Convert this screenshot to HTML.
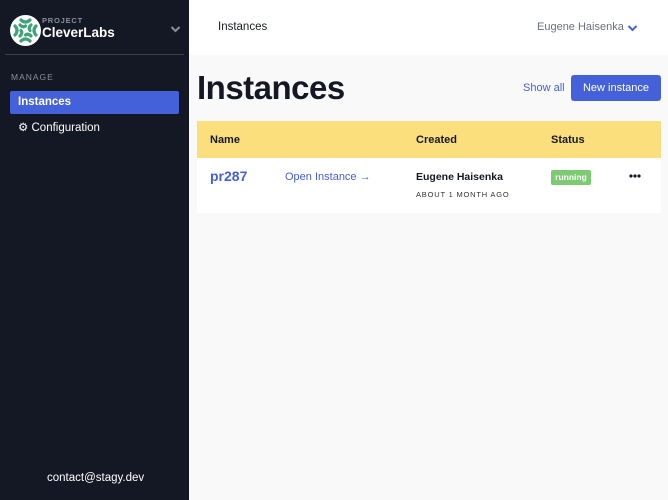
<!DOCTYPE html>
<html><head><meta charset="utf-8"><style>
*{box-sizing:border-box;margin:0;padding:0}
body{width:668px;height:500px;overflow:hidden;font-family:"Liberation Sans",sans-serif;background:#f9f9f9;position:relative}
.sb{position:absolute;left:0;top:0;width:189px;height:500px;background:#141824}
.abs{position:absolute;white-space:nowrap}
.main{position:absolute;left:189px;top:0;right:0;bottom:0}
</style></head><body>
<div class="sb">
  <svg class="abs" style="left:10px;top:15px" width="31" height="31" viewBox="0 0 31 31">
    <circle cx="15.5" cy="15.5" r="15.5" fill="#fff"/>
    <g fill="none" stroke="#3fa37a" stroke-width="3.2" stroke-linecap="round">
      <path d="M11 5 Q15.5 9 20 5"/><path d="M11 26 Q15.5 22 20 26"/>
      <path d="M5 11 Q9 15.5 5 20"/><path d="M26 11 Q22 15.5 26 20"/>
      <path d="M10 10 Q13 13 15.5 11"/><path d="M21 21 Q18 18 15.5 20"/>
      <path d="M21 10 Q18 13 20 15.5"/><path d="M10 21 Q13 18 11 15.5"/>
    </g>
  </svg>
  <div class="abs" style="left:42px;top:16px;font-size:7.5px;letter-spacing:0.8px;color:#8a8f9c;font-weight:bold">PROJECT</div>
  <div class="abs" style="left:42px;top:25px;font-size:13.5px;color:#fff;font-weight:bold">CleverLabs</div>
  <svg class="abs" style="left:170px;top:25px" width="11" height="8" viewBox="0 0 11 8"><path d="M1.5 2 L5.5 6 L9.5 2" stroke="#8a8f9c" stroke-width="2" fill="none"/></svg>
  <div class="abs" style="left:5px;top:54px;width:179px;height:1px;background:#3a3f4c"></div>
  <div class="abs" style="left:11px;top:72px;font-size:8.5px;letter-spacing:1px;color:#8a8f9c">MANAGE</div>
  <div class="abs" style="left:10px;top:91px;width:169px;height:23px;background:#4561d9;border-radius:2px"></div>
  <div class="abs" style="left:18px;top:96px;font-size:11.5px;color:#fff;font-weight:bold">Instances</div>
  <div class="abs" style="left:18px;top:120px;font-size:11.5px;color:#fff">⚙ Configuration</div>
  <div class="abs" style="left:47px;top:472px;font-size:11.5px;color:#fff">contact@stagy.dev</div>
</div>
<div class="main">
  <div class="abs" style="left:0;top:0;width:479px;height:55px;background:#fff"></div>
  <div class="abs" style="left:29px;top:21px;font-size:11.5px;color:#1a1d24">Instances</div>
  <div class="abs" style="left:348px;top:21px;font-size:11px;color:#6b7080">Eugene Haisenka</div>
  <svg class="abs" style="left:438px;top:24px" width="11" height="8" viewBox="0 0 11 8"><path d="M1.5 2 L5.5 6 L9.5 2" stroke="#4561d9" stroke-width="2" fill="none"/></svg>
  <div class="abs" style="left:8px;top:69px;font-size:33px;font-weight:bold;color:#141824;letter-spacing:-0.5px">Instances</div>
  <div class="abs" style="left:334px;top:82px;font-size:11px;color:#4561d9">Show all</div>
  <div class="abs" style="left:382px;top:75px;width:90px;height:26px;background:#4561d9;border-radius:3px;color:#fff;font-size:11px;text-align:center;line-height:26px">New instance</div>
  <div class="abs" style="left:8px;top:121px;width:464px;height:37px;background:#fadf7c"></div>
  <div class="abs" style="left:21px;top:134px;font-size:11px;font-weight:bold;color:#141824">Name</div>
  <div class="abs" style="left:227px;top:134px;font-size:11px;font-weight:bold;color:#141824">Created</div>
  <div class="abs" style="left:362px;top:134px;font-size:11px;font-weight:bold;color:#141824">Status</div>
  <div class="abs" style="left:8px;top:158px;width:464px;height:55px;background:#fff"></div>
  <div class="abs" style="left:21px;top:168px;font-size:14px;font-weight:bold;color:#4561d9">pr287</div>
  <div class="abs" style="left:96px;top:171px;font-size:11px;color:#4561d9">Open Instance →</div>
  <div class="abs" style="left:227px;top:171px;font-size:10.5px;font-weight:bold;color:#141824">Eugene Haisenka</div>
  <div class="abs" style="left:227px;top:190px;font-size:7.5px;letter-spacing:0.8px;color:#333">ABOUT 1 MONTH AGO</div>
  <div class="abs" style="left:362px;top:170px;width:40px;height:15px;background:#7ccb72;border-radius:2px;color:#fff;font-size:8.5px;font-weight:bold;text-align:center;line-height:15px">running</div>
  <svg class="abs" style="left:440px;top:174px" width="12" height="4" viewBox="0 0 12 4"><circle cx="2" cy="2" r="1.6" fill="#141824"/><circle cx="6" cy="2" r="1.6" fill="#141824"/><circle cx="10" cy="2" r="1.6" fill="#141824"/></svg>
</div>
</body></html>
